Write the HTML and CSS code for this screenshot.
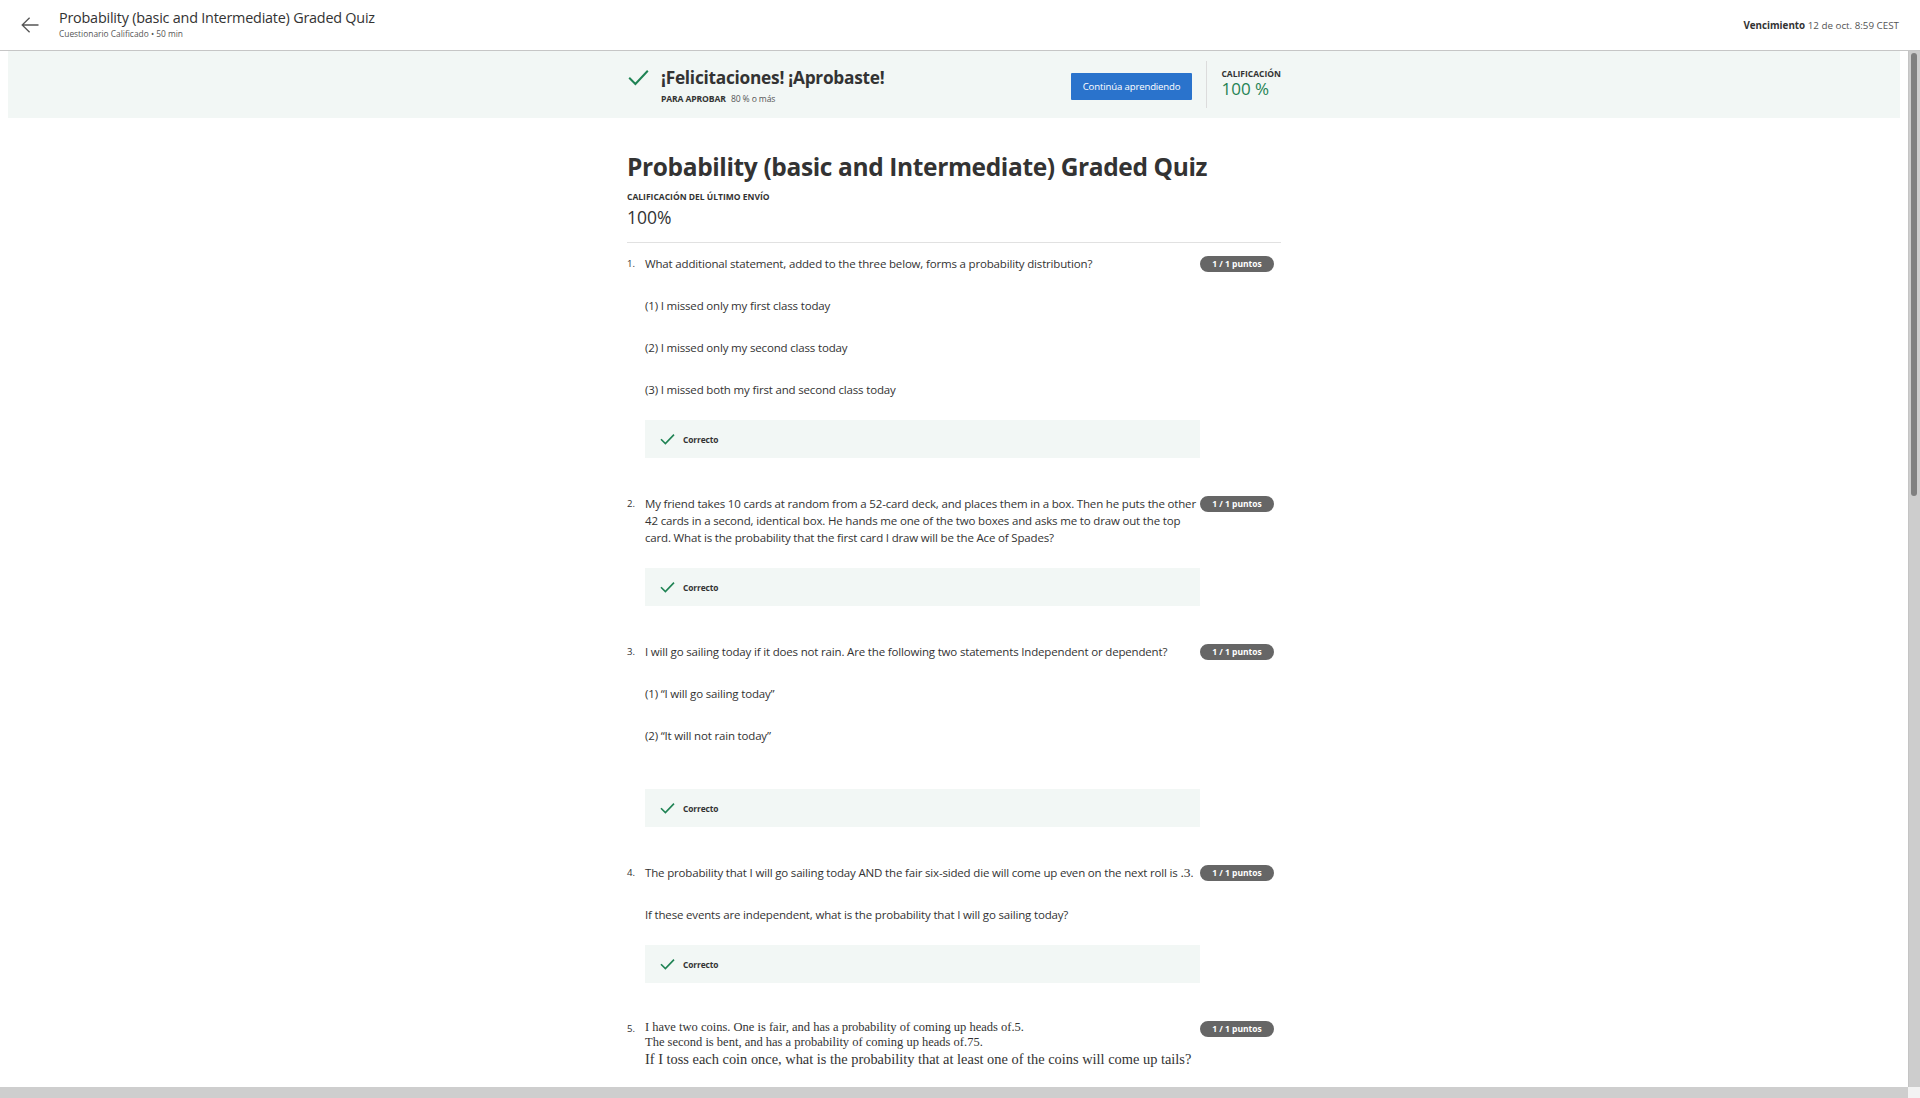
FILE: index.html
```html
<!DOCTYPE html>
<html lang="es">
<head>
<meta charset="utf-8">
<title>Probability (basic and Intermediate) Graded Quiz</title>
<link rel="stylesheet" href="styles.css">
</head>
<body>
<div class="app">
  <header class="topbar">
    <button class="back" aria-label="Volver">
      <svg width="18" height="16" viewBox="0 0 18 16"><path d="M17.5 8H1.2M8.6 0.7L1.2 8l7.4 7.3" fill="none" stroke="#555" stroke-width="1.3"/></svg>
    </button>
    <div class="topbar-title">
      <div class="tb-name">Probability (basic and Intermediate) Graded Quiz</div>
      <div class="tb-meta">Cuestionario Calificado • 50 min</div>
    </div>
    <div class="due"><strong>Vencimiento</strong> 12 de oct. 8:59 CEST</div>
  </header>
  <div class="viewport">
    <div class="viewport-row">
      <main class="scroller">
        <section class="banner">
          <div class="banner-inner">
            <div class="pass">
              <svg class="check-lg" width="21" height="17" viewBox="0 0 21 17"><path d="M1.2 8.8l6.2 6.2L19.8 1.8" fill="none" stroke="#1f8354" stroke-width="2"/></svg>
              <div class="pass-title">¡Felicitaciones! ¡Aprobaste!</div>
              <div class="pass-sub"><strong>PARA APROBAR</strong> 80 % o más</div>
            </div>
            <button class="btn-primary">Continúa aprendiendo</button>
            <div class="divider"></div>
            <div class="grade">
              <div class="grade-label">CALIFICACIÓN</div>
              <div class="grade-value">100 %</div>
            </div>
          </div>
        </section>

        <div class="col">
          <h1 class="quiz-title">Probability (basic and Intermediate) Graded Quiz</h1>
          <div class="last-label">CALIFICACIÓN DEL ÚLTIMO ENVÍO</div>
          <div class="last-value">100%</div>
          <div class="rule"></div>

          <div class="q">
            <div class="q-num">1.</div>
            <div class="q-body">
              <div class="prompt">
                <p>What additional statement, added to the three below, forms a probability distribution?</p>
                <p>(1) I missed only my first class today</p>
                <p>(2) I missed only my second class today</p>
                <p>(3) I missed both my first and second class today</p>
              </div>
              <div class="feedback"><svg width="15" height="12" viewBox="0 0 15 12"><path d="M1 6.2l4.4 4.4L14 1.6" fill="none" stroke="#1f8354" stroke-width="1.6"/></svg><span>Correcto</span></div>
            </div>
            <div class="q-pts"><span class="pill">1 / 1 puntos</span></div>
          </div>

          <div class="q">
            <div class="q-num">2.</div>
            <div class="q-body">
              <div class="prompt">
                <p>My friend takes 10 cards at random from a 52-card deck, and places them in a box. Then he puts the other 42 cards in a second, identical box. He hands me one of the two boxes and asks me to draw out the top card. What is the probability that the first card I draw will be the Ace of Spades?</p>
              </div>
              <div class="feedback"><svg width="15" height="12" viewBox="0 0 15 12"><path d="M1 6.2l4.4 4.4L14 1.6" fill="none" stroke="#1f8354" stroke-width="1.6"/></svg><span>Correcto</span></div>
            </div>
            <div class="q-pts"><span class="pill">1 / 1 puntos</span></div>
          </div>

          <div class="q">
            <div class="q-num">3.</div>
            <div class="q-body">
              <div class="prompt prompt-extra">
                <p>I will go sailing today if it does not rain. Are the following two statements Independent or dependent?</p>
                <p>(1) “I will go sailing today”</p>
                <p>(2) “It will not rain today”</p>
              </div>
              <div class="feedback"><svg width="15" height="12" viewBox="0 0 15 12"><path d="M1 6.2l4.4 4.4L14 1.6" fill="none" stroke="#1f8354" stroke-width="1.6"/></svg><span>Correcto</span></div>
            </div>
            <div class="q-pts"><span class="pill">1 / 1 puntos</span></div>
          </div>

          <div class="q">
            <div class="q-num">4.</div>
            <div class="q-body">
              <div class="prompt">
                <p>The probability that I will go sailing today AND the fair six-sided die will come up even on the next roll is <span class="math">.3</span>.</p>
                <p>If these events are independent, what is the probability that I will go sailing today?</p>
              </div>
              <div class="feedback"><svg width="15" height="12" viewBox="0 0 15 12"><path d="M1 6.2l4.4 4.4L14 1.6" fill="none" stroke="#1f8354" stroke-width="1.6"/></svg><span>Correcto</span></div>
            </div>
            <div class="q-pts"><span class="pill">1 / 1 puntos</span></div>
          </div>

          <div class="q">
            <div class="q-num">5.</div>
            <div class="q-body">
              <div class="prompt prompt-tex">
                <div class="tex-sm">I have two coins. One is fair, and has a probability of coming up heads of.5.</div>
                <div class="tex-sm">The second is bent, and has a probability of coming up heads of.75.</div>
                <div class="tex-lg">If I toss each coin once, what is the probability that at least one of the coins will come up tails?</div>
              </div>
            </div>
            <div class="q-pts"><span class="pill">1 / 1 puntos</span></div>
          </div>
        </div>
      </main>
      <div class="vbar"><div class="vthumb"></div></div>
    </div>
    <div class="hbar-row">
      <div class="hbar"></div>
      <div class="corner"></div>
    </div>
  </div>
</div>
</body>
</html>
```

FILE: styles.css
```css
* { box-sizing: border-box; }
html, body { margin: 0; height: 100%; }
body {
  font-family: "Open Sans", "Liberation Sans", sans-serif;
  color: #333;
  background: #fff;
  overflow: hidden;
}
.app { height: 100vh; display: flex; flex-direction: column; }

/* top bar */
.topbar {
  flex: none;
  height: 51px;
  border-bottom: 1px solid #c6c6c6;
  display: flex;
  align-items: flex-start;
  padding: 8px 21px 0 21px;
}
.back {
  border: 0; background: none; padding: 0;
  margin: 9px 20px 0 0;
  width: 18px; height: 16px;
  display: flex; cursor: pointer;
}
.tb-name { font-size: 14.4px; line-height: 20px; color: #333; letter-spacing: -0.22px; }
.tb-meta { font-size: 8.4px; line-height: 12px; color: #555; }
.due {
  margin-left: auto;
  margin-top: 11px;
  font-size: 9.8px;
  line-height: 14px;
  color: #555;
}
.due strong { color: #333; font-weight: 700; }

/* viewport with scrollbars */
.viewport { flex: 1; min-height: 0; display: flex; flex-direction: column; }
.viewport-row { flex: 1; min-height: 0; display: flex; }
.scroller { flex: 1; min-width: 0; overflow: hidden; }
.vbar {
  flex: none;
  width: 12px;
  background: #cdcdcd;
  border-left: 1px solid #c4c4c4;
  padding: 2px 2px 0 2px;
}
.vthumb { width: 6px; height: 443px; border-radius: 3px; background: #808080; }
.hbar-row { flex: none; height: 11px; display: flex; }
.hbar { flex: 1; background: #cecece; }
.corner { width: 12px; background: #f3f3f3; }

/* banner */
.banner {
  margin: 0 8px;
  height: 67px;
  background: #f2f7f5;
}
.banner-inner {
  width: 654px;
  height: 100%;
  margin: 0 auto;
  display: flex;
  align-items: center;
}
.pass {
  display: grid;
  grid-template-columns: 21px auto;
  column-gap: 12px;
  row-gap: 4px;
  align-items: center;
  margin: 2px 0 0 1px;
}
.check-lg { grid-row: 1; grid-column: 1; }
.pass-title { grid-row: 1; grid-column: 2; font-size: 17.3px; line-height: 22px; font-weight: 700; color: #333; letter-spacing: -0.26px; }
.pass-sub { grid-row: 2; grid-column: 2; font-size: 8.6px; line-height: 12px; color: #555; letter-spacing: -0.13px; }
.pass-sub strong { color: #333; margin-right: 3px; }
.btn-primary {
  margin-left: auto;
  height: 27px;
  padding: 0 12px;
  border: 0;
  border-radius: 1px;
  background: #2a73cc;
  color: #fff;
  font-family: inherit;
  font-size: 9.6px;
  letter-spacing: -0.15px;
  margin-top: 4px;
}
.divider { width: 1px; height: 47px; background: #dcdcdc; margin: 0 14px 0 14px; }
.grade { margin-top: -3px; }
.grade-label { font-size: 8.5px; line-height: 11px; font-weight: 700; color: #333; }
.grade-value { font-size: 17px; line-height: 20px; color: #1f8354; }

/* column */
.col { width: 654px; margin: 0 auto; padding: 32px 0 1300px; }
.quiz-title { margin: 0; font-size: 24.5px; line-height: 34px; font-weight: 700; color: #333; letter-spacing: -0.37px; }
.last-label { margin-top: 7px; font-size: 8.5px; line-height: 12px; font-weight: 700; color: #333; }
.last-value { margin-top: 3px; font-size: 17.5px; line-height: 22px; color: #333; }
.rule { margin-top: 14px; height: 1px; background: #e1e1e1; margin-bottom: 12px; }

.q { display: flex; align-items: flex-start; padding-bottom: 37px; }
.q-num { width: 18px; flex: none; font-size: 9.6px; line-height: 17px; color: #333; }
.q-body { width: 555px; flex: none; }
.prompt {
  font-size: 11.5px;
  line-height: 17px;
  letter-spacing: -0.17px;
  color: #333;
  margin: 0 -4px 22px 0;
}
.prompt p { margin: 0; }
.prompt p + p { margin-top: 25px; }
.prompt-extra { padding-bottom: 23px; }
.math { font-family: "Liberation Serif", serif; font-size: 13.5px; letter-spacing: 0; }
.q-pts { flex: none; margin-top: 1px; }
.pill {
  display: block;
  width: 74px; height: 16px;
  border-radius: 8px;
  background: #666;
  color: #fff;
  font-size: 8.5px;
  line-height: 16px;
  font-weight: 700;
  text-align: center;
}
.feedback {
  height: 38px;
  background: #f2f7f5;
  display: flex;
  align-items: center;
  padding-left: 15px;
  gap: 8px;
  font-size: 8.4px;
  letter-spacing: -0.12px;
  font-weight: 700;
  color: #333;
}
.prompt-tex { font-family: "Liberation Serif", serif; color: #333; margin-bottom: 0; letter-spacing: 0; }
.tex-sm { font-size: 12.5px; line-height: 15px; }
.tex-lg { font-size: 14.4px; line-height: 19px; }
```
